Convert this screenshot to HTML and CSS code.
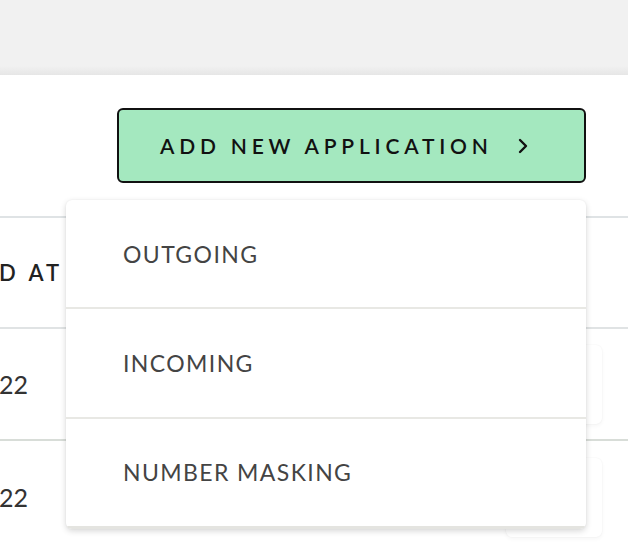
FILE: index.html
```html
<!DOCTYPE html>
<html>
<head>
<meta charset="utf-8">
<link rel="stylesheet" href="styles.css">
</head>
<body>
<div class="topbar"></div>
<div class="toolbar">
  <button class="add-btn">
    <span class="add-label">ADD NEW APPLICATION</span>
    <svg class="chev" width="14" height="16" viewBox="0 0 14 16"><path d="M4 2 L10 8 L4 14" fill="none" stroke="#111" stroke-width="2.4" stroke-linecap="round" stroke-linejoin="round"/></svg>
  </button>
</div>
<div class="table">
  <div class="row head"><span class="head-text">D AT</span></div>
  <div class="row"><span class="cell-text">22</span><span class="card"></span></div>
  <div class="row"><span class="cell-text">22</span><span class="card"></span></div>
</div>
<div class="dropdown">
  <div class="item">OUTGOING</div>
  <div class="item">INCOMING</div>
  <div class="item">NUMBER MASKING</div>
</div>
</body>
</html>
```
FILE: styles.css
```css
html, body {
  margin: 0;
  padding: 0;
  background: #ffffff;
  font-family: "Lato", "Liberation Sans", sans-serif;
  overflow: hidden;
}
body {
  width: 628px;
  height: 554px;
  position: relative;
}
.topbar {
  height: 75px;
  background: linear-gradient(to bottom, #f1f1f1 0, #f1f1f1 66px, #e6e6e6 75px);
}
.toolbar {
  height: 141px;
  display: flex;
  justify-content: flex-end;
  align-items: flex-start;
  padding-right: 42px;
  box-sizing: border-box;
  padding-top: 33px;
}
.add-btn {
  width: 469px;
  height: 75px;
  box-sizing: border-box;
  background: #a4e8bf;
  border: 2px solid #111;
  border-radius: 6px;
  display: flex;
  align-items: center;
  padding: 0 0 0 41px;
  font-family: inherit;
  cursor: pointer;
}
.add-label {
  font-size: 21px;
  font-weight: 600;
  letter-spacing: 4.8px;
  color: #111;
}
.chev {
  margin-left: 23px;
}
.table {
  border-top: 2px solid #dfe3e5;
}
.row {
  height: 112px;
  border-bottom: 2px solid #d8ddd8;
  display: flex;
  align-items: center;
  justify-content: space-between;
  padding-right: 26px;
  box-sizing: border-box;
}
.row:last-child {
  border-bottom: none;
}
.row.head {
  height: 111px;
  border-bottom: 2px solid #e0e3e4;
}
.head-text {
  font-size: 22px;
  font-weight: 600;
  letter-spacing: 4px;
  color: #222;
  margin-left: -1px;
}
.cell-text {
  font-size: 25px;
  color: #333;
  margin-left: -1px;
}
.card {
  width: 96px;
  height: 79px;
  border-radius: 6px;
  background: #fff;
  box-shadow: 0 0 2px rgba(0,0,0,0.06), 0 2px 4px rgba(0,0,0,0.04);
}
.dropdown {
  position: absolute;
  left: 66px;
  top: 200px;
  width: 520px;
  height: 329px;
  background: #fff;
  border-radius: 6px;
  box-shadow: 0 2px 6px rgba(0,0,0,0.16), 0 0 2px rgba(0,0,0,0.06);
  display: flex;
  flex-direction: column;
  overflow: hidden;
}
.item {
  flex: 1;
  display: flex;
  align-items: center;
  padding-left: 57px;
  font-size: 23px;
  letter-spacing: 1.4px;
  color: #444;
  border-bottom: 2px solid #e8e8e4;
}
.item:last-child {
  border-bottom: 3px solid #e4e4e0;
}
```
